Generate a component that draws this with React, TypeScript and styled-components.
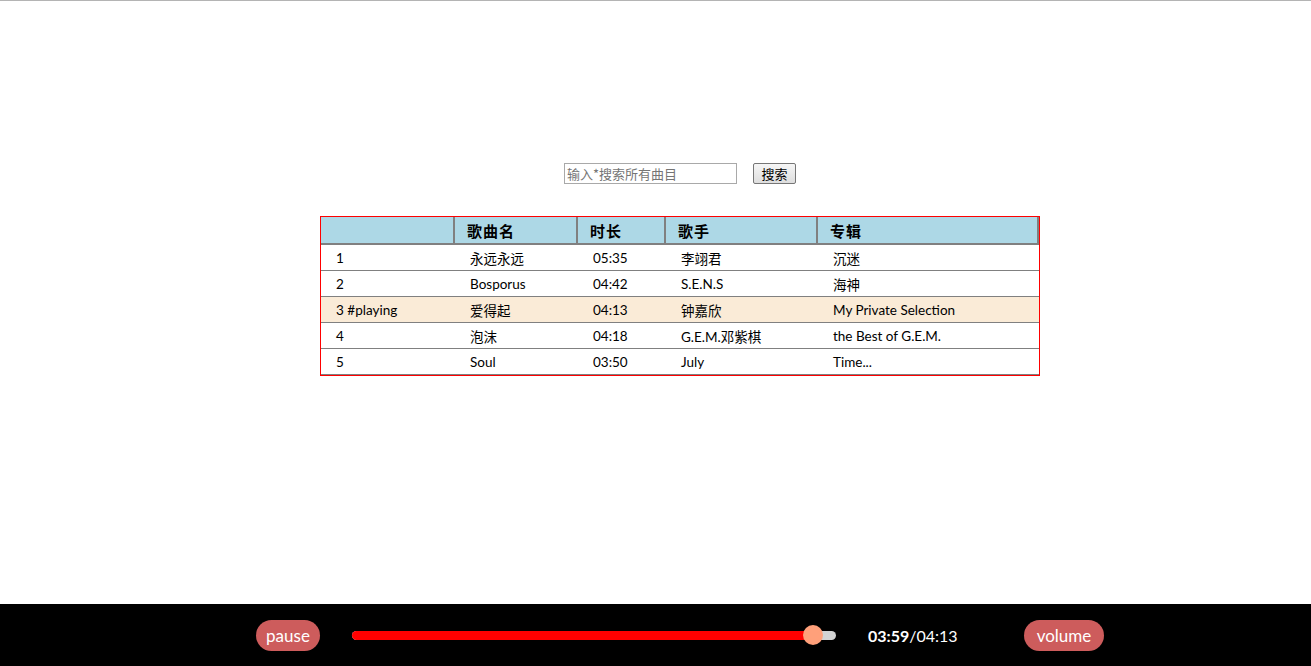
import styled, { createGlobalStyle } from "styled-components";

const songs = [
  { id: 1, name: "永远永远", duration: "05:35", singer: "李翊君", album: "沉迷" },
  { id: 2, name: "Bosporus", duration: "04:42", singer: "S.E.N.S", album: "海神" },
  { id: 3, name: "爱得起", duration: "04:13", singer: "钟嘉欣", album: "My Private Selection" },
  { id: 4, name: "泡沫", duration: "04:18", singer: "G.E.M.邓紫棋", album: "the Best of G.E.M." },
  { id: 5, name: "Soul", duration: "03:50", singer: "July", album: "Time..." },
];

const playingId = 3;
const progress = 0.952;

export default function App() {
  return (
    <>
      <GlobalStyle />
      <Page>
        <Main>
          <SearchBar>
            <SearchInput placeholder="输入*搜索所有曲目" />
            <SearchButton>搜索</SearchButton>
          </SearchBar>
          <SongTable>
            <thead>
              <tr>
                <Th $width={134}></Th>
                <Th $width={123}>歌曲名</Th>
                <Th $width={88}>时长</Th>
                <Th $width={152}>歌手</Th>
                <Th>专辑</Th>
              </tr>
            </thead>
            <tbody>
              {songs.map((song) => (
                <Row key={song.id} $playing={song.id === playingId}>
                  <Td>
                    {song.id}
                    {song.id === playingId && " #playing"}
                  </Td>
                  <Td>{song.name}</Td>
                  <Td>{song.duration}</Td>
                  <Td>{song.singer}</Td>
                  <Td>{song.album}</Td>
                </Row>
              ))}
            </tbody>
          </SongTable>
        </Main>
        <PlayerBar>
          <PillButton $width={64}>pause</PillButton>
          <Track>
            <Filled style={{ width: `${progress * 100}%` }}>
              <Thumb />
            </Filled>
          </Track>
          <Time>
            <b>03:59</b>/04:13
          </Time>
          <PillButton $width={80}>volume</PillButton>
        </PlayerBar>
      </Page>
    </>
  );
}

const GlobalStyle = createGlobalStyle`
  html, body {
    margin: 0;
    padding: 0;
  }
  body {
    font-family: Lato, "Noto Sans CJK SC", sans-serif;
    color: #000;
    border-top: 1px solid #b4b4b4;
  }
`;

const Page = styled.div`
  display: flex;
  flex-direction: column;
  min-height: 665px;
`;

const Main = styled.div`
  flex: 1;
  display: flex;
  flex-direction: column;
  align-items: center;
  padding: 162px 0 0 49px;
`;

const SearchBar = styled.div`
  display: flex;
  align-items: center;
  gap: 16px;
  margin-bottom: 32px;
`;

const SearchInput = styled.input`
  box-sizing: border-box;
  width: 173px;
  height: 21px;
  padding: 1px 2px;
  border: 1px solid #a9a9a9;
  font-family: "Noto Sans CJK SC", sans-serif;
  font-size: 13px;
  outline: none;

  &::placeholder {
    color: #757575;
  }
`;

const SearchButton = styled.button`
  box-sizing: border-box;
  width: 43px;
  height: 21px;
  padding: 0;
  border: 1px solid #767676;
  border-radius: 2px;
  background: linear-gradient(#f6f6f6, #dedede);
  font-family: "Noto Sans CJK SC", sans-serif;
  font-size: 13px;
  line-height: 19px;
  color: #000;
`;

const SongTable = styled.table`
  width: 720px;
  border: 1px solid red;
  border-spacing: 0;
  table-layout: fixed;
`;

const Th = styled.th<{ $width?: number }>`
  box-sizing: border-box;
  width: ${({ $width }) => ($width ? `${$width}px` : "auto")};
  height: 28px;
  padding: 0 0 0 12px;
  background: lightblue;
  border-right: 2px solid gray;
  border-bottom: 2px solid gray;
  text-align: left;
  font-family: "Liberation Serif", "Noto Sans CJK SC", serif;
  font-size: 15px;
  font-weight: 700;
  letter-spacing: 1px;
`;

const Row = styled.tr<{ $playing: boolean }>`
  background: ${({ $playing }) => ($playing ? "antiquewhite" : "#fff")};
`;

const Td = styled.td`
  height: 25px;
  padding: 0 0 0 15px;
  border-bottom: 1px solid gray;
  font-size: 13.5px;
  white-space: nowrap;
`;

const PlayerBar = styled.div`
  height: 62px;
  background: #000;
  display: flex;
  align-items: center;
  justify-content: center;
  padding-left: 49px;
  gap: 32px;
  color: #fff;
`;

const PillButton = styled.div<{ $width: number }>`
  width: ${({ $width }) => $width}px;
  height: 31px;
  border-radius: 16px;
  background: indianred;
  color: #fff;
  display: flex;
  align-items: center;
  justify-content: center;
  font-size: 17px;
`;

const Track = styled.div`
  width: 484px;
  height: 9px;
  border-radius: 5px;
  background: lightgray;
  display: flex;
`;

const Filled = styled.div`
  position: relative;
  height: 100%;
  border-radius: 5px;
  background: red;
`;

const Thumb = styled.div`
  position: absolute;
  right: -10px;
  top: 50%;
  width: 20px;
  height: 20px;
  margin-top: -10px;
  border-radius: 50%;
  background: lightsalmon;
`;

const Time = styled.div`
  width: 92px;
  margin-right: 32px;
  font-size: 16px;
  white-space: nowrap;
`;
